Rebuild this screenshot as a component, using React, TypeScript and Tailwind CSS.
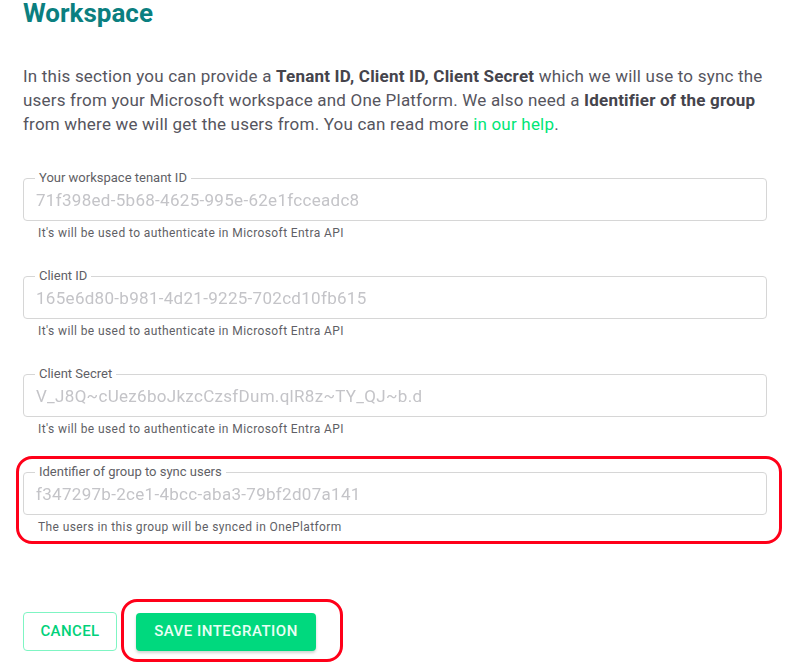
import React from 'react';

const fields = [
  {
    label: 'Your workspace tenant ID',
    value: '71f398ed-5b68-4625-995e-62e1fcceadc8',
    help: "It's will be used to authenticate in Microsoft Entra API",
  },
  {
    label: 'Client ID',
    value: '165e6d80-b981-4d21-9225-702cd10fb615',
    help: "It's will be used to authenticate in Microsoft Entra API",
  },
  {
    label: 'Client Secret',
    value: 'V_J8Q~cUez6boJkzcCzsfDum.qlR8z~TY_QJ~b.d',
    help: "It's will be used to authenticate in Microsoft Entra API",
  },
  {
    label: 'Identifier of group to sync users',
    value: 'f347297b-2ce1-4bcc-aba3-79bf2d07a141',
    help: 'The users in this group will be synced in OnePlatform',
    marked: true,
  },
];

function Field({ label, value, help }: { label: string; value: string; help: string }) {
  return (
    <div>
      <fieldset className="border border-[#d6d6d6] rounded-[4px] pl-[11px] pr-3 pb-[5px]">
        <legend className="px-1 text-[13px] leading-[14px] text-[#5f5f66]">{label}</legend>
        <input
          readOnly
          value={value}
          className="w-full h-[30px] pl-[1px] text-[17px] tracking-[0.3px] text-[#c4c4c8] blur-[0.5px] outline-none bg-transparent"
        />
      </fieldset>
      <p className="mt-[5px] pl-[15px] text-[12px] leading-[14px] tracking-[0.4px] text-[#5f5f66]">{help}</p>
    </div>
  );
}

export default function App() {
  return (
    <div className="w-[793px] h-[665px] bg-white overflow-hidden font-['Roboto',sans-serif] pl-[23px] pr-[26px]">
      <h1 className="text-[26px] leading-[27px] font-bold text-[#0b7f80]">Workspace</h1>

      <p className="mt-[37px] text-[17px] leading-[24px] tracking-[0.2px] text-[#56555e]">
        In this section you can provide a <b className="text-[#45444c]">Tenant ID, Client ID, Client Secret</b> which we
        will use to sync the users from your Microsoft workspace and One Platform. We also need a{' '}
        <b className="text-[#45444c]">Identifier of the group</b> from where we will get the users from. You can read
        more <span className="text-[#00e676]">in our help</span>.
      </p>

      <div className="mt-[35px] flex flex-col gap-[29px]">
        {fields.map((f) => (
          <div key={f.label} className="relative">
            {f.marked && (
              <div className="absolute top-[-9px] bottom-[-10px] left-[-7px] right-[-15px] border-[3px] border-[#ff0019] rounded-[16px] pointer-events-none" />
            )}
            <Field label={f.label} value={f.value} help={f.help} />
          </div>
        ))}
      </div>

      <div className="mt-[78px] flex items-center gap-[19px]">
        <button className="w-[94px] h-[39px] rounded-[4px] border border-[#7ff5c3] text-[15px] font-medium tracking-[0.4px] text-[#00d17a]">
          CANCEL
        </button>
        <div className="relative">
          <div className="absolute top-[-14px] bottom-[-11px] left-[-15px] right-[-27px] border-[3px] border-[#ff0019] rounded-[16px] pointer-events-none" />
          <button className="w-[180px] h-[38px] rounded-[4px] bg-[#00d97e] shadow-[0_2px_3px_rgba(0,0,0,0.18)] text-[15px] font-medium tracking-[0.5px] text-[#eafff5]">
            SAVE INTEGRATION
          </button>
        </div>
      </div>
    </div>
  );
}
